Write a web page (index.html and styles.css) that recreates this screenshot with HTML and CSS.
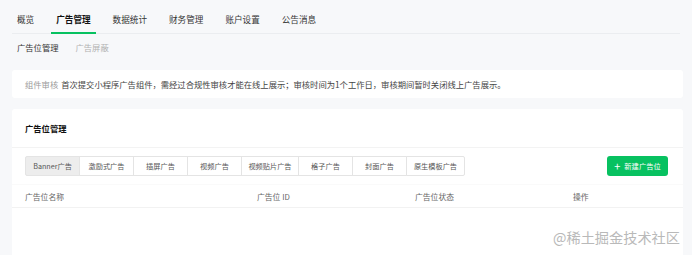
FILE: index.html
```html
<!DOCTYPE html>
<html>
<head>
<meta charset="utf-8">
	<title>广告管理</title>
	<link rel="stylesheet" href="styles.css">
</head>
<body>
	<div class="nav">
		<div class="navItem">概览</div>
		<div class="navItem active">广告管理</div>
		<div class="navItem">数据统计</div>
		<div class="navItem">财务管理</div>
		<div class="navItem">账户设置</div>
		<div class="navItem">公告消息</div>
	</div>
	<div class="subNav">
		<div class="subItem">广告位管理</div>
		<div class="subItem gray">广告屏蔽</div>
	</div>
	<div class="notice">
		<span class="label">组件审核</span>
		首次提交小程序广告组件，需经过合规性审核才能在线上展示；审核时间为1个工作日，审核期间暂时关闭线上广告展示。
	</div>
	<div class="card">
		<div class="cardTitle">广告位管理</div>
		<div class="toolbar">
			<div class="tabs">
				<div class="tab current">Banner广告</div>
				<div class="tab">激励式广告</div>
				<div class="tab">插屏广告</div>
				<div class="tab">视频广告</div>
				<div class="tab">视频贴片广告</div>
				<div class="tab">格子广告</div>
				<div class="tab">封面广告</div>
				<div class="tab">原生模板广告</div>
			</div>
			<div class="newBtn"><span class="plus">+</span>新建广告位</div>
		</div>
		<div class="tableHead">
			<div class="col c1">广告位名称</div>
			<div class="col c2">广告位 ID</div>
			<div class="col c3">广告位状态</div>
			<div class="col c4">操作</div>
		</div>
	</div>
	<div class="watermark">@稀土掘金技术社区</div>
</body>
</html>
```
FILE: styles.css
```css
body{
	margin: 0px;
	padding: 0px;
	background-color: #f7f8fa;
	font-family: "Noto Sans CJK SC", "Liberation Sans", sans-serif;
	font-size: 8.3px;
	color: #353535;
	height: 255px;
	overflow: hidden;
	position: relative;
}
.nav{
	display: flex;
	gap: 12px;
	margin: 0px 12px 0px 12px;
	border-bottom: 1px solid #ebedf0;
	height: 33px;
}
.navItem{
	padding: 5px 5px 0px 5px;
	display: flex;
	align-items: center;
	font-size: 8.6px;
	color: #353535;
	border-bottom: 2px solid transparent;
	margin-bottom: -1px;
}
.active{
	font-weight: bold;
	color: #111;
	border-bottom-color: #07c160;
}
.subNav{
	display: flex;
	gap: 17px;
	padding: 0px 17px;
	height: 25px;
	align-items: center;
	margin-bottom: 1px;
}
.subItem{
	color: #353535;
}
.gray{
	color: #b2b2b2;
}
.notice{
	margin: 11px 9px 11px 12px;
	height: 28px;
	background: #fff;
	border-radius: 3px;
	display: flex;
	align-items: center;
	padding-left: 13px;
	color: #444;
}
.label{
	color: #9a9a9a;
	margin-right: 3px;
}
.card{
	margin: 0px 9px 0px 12px;
	background: #fff;
	border-radius: 3px 3px 0 0;
	height: 150px;
}
.cardTitle{
	height: 38px;
	line-height: 38px;
	padding-left: 13px;
	font-weight: bold;
	color: #111;
	border-bottom: 1px solid #f3f3f3;
}
.toolbar{
	display: flex;
	justify-content: space-between;
	align-items: center;
	padding: 8px 15px 0px 13px;
}
.tabs{
	display: flex;
}
.tab{
	height: 18px;
	width: 53px;
	border: 1px solid #e4e4e4;
	margin-left: -1px;
	display: flex;
	align-items: center;
	justify-content: center;
	font-size: 7.2px;
	color: #555;
	background: #fff;
}
.tab:first-child{
	margin-left: 0px;
	border-radius: 2px 0 0 2px;
}
.tab:last-child{
	width: 57px;
	border-radius: 0 2px 2px 0;
}
.tab:nth-child(5){
	width: 56px;
}
.current{
	background: #ededed;
}
.newBtn{
	width: 61px;
	height: 20px;
	background: #07c160;
	border-radius: 3px;
	color: #fff;
	font-size: 7.3px;
	display: flex;
	align-items: center;
	justify-content: center;
}
.plus{
	font-size: 11px;
	margin-right: 4px;
	line-height: 1;
}
.tableHead{
	display: flex;
	margin-top: 8px;
	height: 22px;
	align-items: center;
	border-top: 1px solid #fafafa;
	border-bottom: 1px solid #f2f2f2;
	color: #666;
	font-size: 7.8px;
}
.col{
	padding-left: 13px;
}
.c1{ width: 219px; }
.c2{ width: 145px; }
.c3{ width: 145px; }
.watermark{
	position: absolute;
	right: 12px;
	bottom: 8px;
	font-size: 14.2px;
	color: #b9b9b9;
	text-shadow: 0 0 1px #fff;
}
```
